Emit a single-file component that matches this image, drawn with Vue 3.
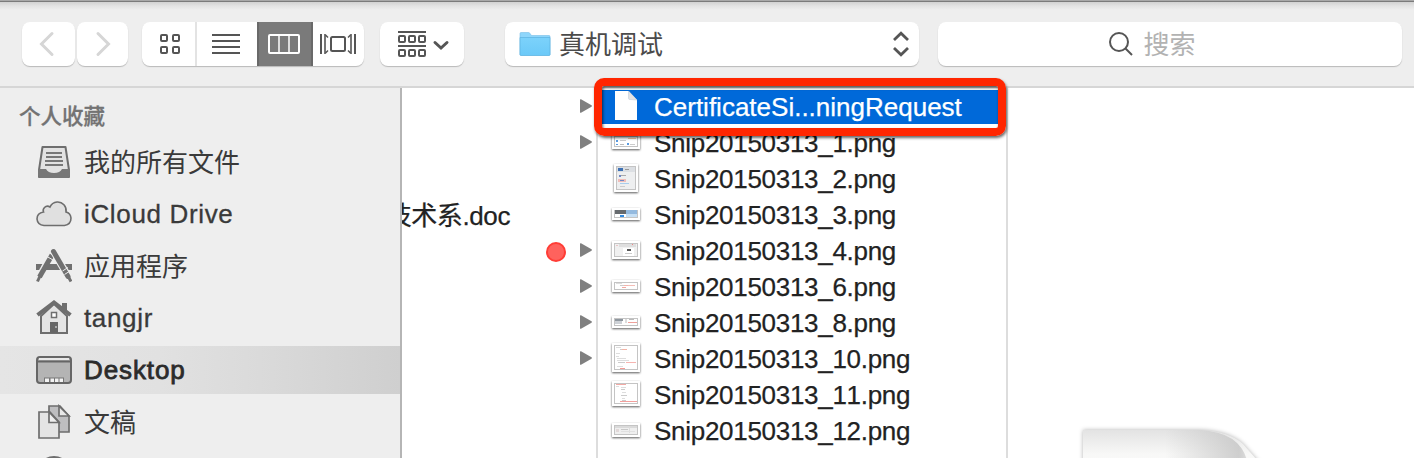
<script setup>
const folders = [
  { arrow: true },
  { arrow: true },
  {},
  { name: '技术系.doc' },
  { arrow: true, tag: true },
  { arrow: true },
  { arrow: true },
  { arrow: true },
  {},
  {},
]

// Each thumbnail: outer frame (x, y, w, h) and small coloured marks [x, y, w, h, colour]
const files = [
  { name: 'Snip20150313_1.png', x: 4, y: 9, w: 28, h: 15, marks: [[8, 15, 2, 2, '#5a9be0'], [12, 15, 6, 1, '#ccc'], [20, 13, 8, 1, '#f0c9a8'], [8, 19, 2, 1, '#5a9be0'], [12, 19, 4, 1, '#bbb'], [19, 18, 2, 2, '#5a9be0'], [22, 19, 5, 1, '#ccc']] },
  { name: 'Snip20150313_2.png', x: 6, y: 3, w: 24, h: 28, bg: '#eeeff0', marks: [[9, 6, 18, 5, '#dcdfe3'], [10, 7, 5, 3, '#3f72b5'], [17, 8, 4, 1, '#999'], [11, 14, 2, 2, '#7189c5'], [13, 14, 5, 1, '#aaa'], [10, 18, 8, 3, '#f0bdb9'], [12, 19, 4, 1, '#7189c5'], [12, 22, 9, 1, '#a9cdec'], [12, 25, 5, 1, '#ccc']] },
  { name: 'Snip20150313_3.png', x: 4, y: 11, w: 28, h: 12, marks: [[7, 13, 11, 4, '#666a6e'], [18, 13, 11, 4, '#94badf'], [18, 17, 11, 3, '#c5dff5'], [12, 18, 4, 2, '#338be0']] },
  { name: 'Snip20150313_4.png', x: 4, y: 8, w: 28, h: 18, bg: '#f0f0f0', marks: [[11, 11, 17, 3, '#dedede'], [8, 12, 2, 1, '#e9c5c5'], [15, 15, 11, 8, '#fff'], [19, 16, 4, 2, '#555'], [17, 20, 7, 1, '#ccc'], [24, 11, 1, 1, '#e88']] },
  { name: 'Snip20150313_6.png', x: 4, y: 11, w: 28, h: 12, marks: [[8, 14, 6, 1, '#ddd'], [12, 16, 4, 1, '#ccc'], [16, 16, 4, 1, '#f2b5ad'], [20, 16, 7, 1, '#f4beb7'], [14, 18, 4, 1, '#f4a9a2']] },
  { name: 'Snip20150313_8.png', x: 4, y: 11, w: 28, h: 12, marks: [[7, 14, 8, 2, '#8f979f'], [7, 16, 7, 3, '#cdd1d6'], [17, 14, 2, 4, '#ddd'], [21, 14, 5, 1, '#bbb'], [20, 17, 9, 1, '#f0a19b']] },
  { name: 'Snip20150313_10.png', x: 4, y: 2, w: 28, h: 29, marks: [[8, 6, 5, 1, '#ddd'], [12, 8, 4, 1, '#ccc'], [14, 8, 5, 1, '#f4b3a5'], [8, 12, 4, 1, '#ddd'], [8, 15, 3, 1, '#ddd'], [9, 17, 9, 1, '#ddd'], [9, 19, 12, 1, '#ddd'], [10, 21, 7, 1, '#ccc'], [18, 21, 10, 1, '#f6b5b1'], [9, 25, 6, 1, '#ddd'], [12, 27, 5, 1, '#f29a94']] },
  { name: 'Snip20150313_11.png', x: 4, y: 4, w: 28, h: 25, marks: [[8, 7, 10, 1, '#f3aaa5'], [8, 9, 3, 1, '#ddd'], [13, 10, 5, 1, '#ddd'], [13, 12, 4, 1, '#ccc'], [14, 15, 4, 1, '#ddd'], [13, 18, 6, 1, '#ccc'], [14, 21, 3, 1, '#ddd'], [14, 23, 4, 1, '#ccc'], [12, 24, 17, 1, '#f3a09d']] },
  { name: 'Snip20150313_12.png', x: 4, y: 10, w: 28, h: 14, bg: '#efefef', marks: [[7, 13, 22, 2, '#dadada'], [8, 16, 3, 3, '#e1d8d8'], [13, 16, 7, 1, '#c8c8c8'], [21, 14, 1, 6, '#ddd'], [13, 18, 14, 1, '#e0e0e0']] },
]
</script>

<template>
  <div class="dialog">
    <header class="toolbar">
      <div class="btn back">
        <svg width="53" height="44" viewBox="0 0 53 44"><path d="M30 11.500 L19.500 22 L30 32.500" fill="none" stroke="#d6d6d6" stroke-width="3" stroke-linecap="round" /></svg>
      </div>
      <div class="btn forward">
        <svg width="51" height="44" viewBox="0 0 51 44"><path d="M21 11.500 L31.500 22 L21 32.500" fill="none" stroke="#d6d6d6" stroke-width="3" stroke-linecap="round" /></svg>
      </div>
      <div class="btn views">
        <div class="seg icons">
          <svg width="53" height="44" viewBox="0 0 53 44" fill="none" stroke="#555" stroke-width="2">
            <rect x="19" y="13" width="6" height="6" rx="1" /><rect x="31" y="13" width="6" height="6" rx="1" />
            <rect x="19" y="25" width="6" height="6" rx="1" /><rect x="31" y="25" width="6" height="6" rx="1" />
          </svg>
        </div>
        <div class="seg list">
          <svg width="60" height="44" viewBox="0 0 60 44"><path d="M15 13H43M15 19H43M15 25H43M15 31H43" stroke="#555" stroke-width="2" /></svg>
        </div>
        <div class="seg columns">
          <svg width="52" height="44" viewBox="0 0 52 44" fill="none" stroke="#fff" stroke-width="2"><rect x="10" y="13" width="30" height="18" rx="1" /><path d="M20 13V31M30 13V31" stroke-width="1.500" /></svg>
        </div>
        <div class="seg flow">
          <svg width="51" height="44" viewBox="0 0 51 44" fill="none" stroke="#555" stroke-width="2">
            <rect x="18" y="15" width="14" height="14" rx="1.500" />
            <path d="M8 12V32M42 12V32" />
            <path d="M12 12V32M38 12V32" stroke-width="1.600" />
            <path d="M12.500 13L15 15.500M12.500 31L15 28.500M37.500 13L35 15.500M37.500 31L35 28.500" stroke-width="1.500" />
          </svg>
        </div>
      </div>
      <div class="btn arrange">
        <svg width="84" height="44" viewBox="0 0 84 44" fill="none" stroke="#555" stroke-width="2">
          <path d="M18 10H46M18 24H46" />
          <rect x="19" y="14" width="6" height="6" rx="1" /><rect x="29" y="14" width="6" height="6" rx="1" /><rect x="39" y="14" width="6" height="6" rx="1" />
          <rect x="19" y="28" width="6" height="6" rx="1" /><rect x="29" y="28" width="6" height="6" rx="1" /><rect x="39" y="28" width="6" height="6" rx="1" />
          <path d="M55 20.500L61 26L67 20.500" stroke-width="3" stroke-linecap="round" />
        </svg>
      </div>
      <div class="btn path">
        <svg width="32" height="28" viewBox="0 0 32 28">
          <defs><linearGradient id="folder" x1="0" y1="0" x2="0" y2="1"><stop offset="0" stop-color="#7cd2fb" /><stop offset="1" stop-color="#6bc9f8" /></linearGradient></defs>
          <path d="M1 25V3.500Q1 2.500 2 2.500H9.500Q10.500 2.500 11 3.500L12.500 5.500H30Q31 5.500 31 6.500V25Z" fill="#8ed6fb" stroke="#77bde8" stroke-width=".6" />
          <path d="M1 7.500H31V24.500Q31 25.500 30 25.500H2Q1 25.500 1 24.500Z" fill="url(#folder)" stroke="#5cb2df" stroke-width=".7" />
        </svg>
        <span class="path-name">真机调试</span>
        <svg class="stepper" width="20" height="28" viewBox="0 0 20 28" fill="none" stroke="#555" stroke-width="2.800"><path d="M3 10L10 3.300L17 10M3 18L10 24.700L17 18" /></svg>
      </div>
      <div class="btn search">
        <svg width="28" height="28" viewBox="0 0 28 28" fill="none" stroke="#555" stroke-width="2"><circle cx="12" cy="12" r="9" /><path d="M18.500 18.500L25 25" /></svg>
        <span>搜索</span>
      </div>
    </header>

    <div class="body">
      <aside class="sidebar">
        <h2>个人收藏</h2>
        <div class="place">
          <svg width="36" height="36" viewBox="0 0 36 36">
            <path d="M6.500 3H29.500L33 26V33H3V26Z" fill="#e2e2e2" stroke="#6e6e6e" stroke-width="2" stroke-linejoin="round" />
            <path d="M2 25H10Q12 29 18 29Q24 29 26 25H34V31Q34 34 31 34H5Q2 34 2 31Z" fill="#777" />
            <path d="M10 9H26M10 13H26M9 17H27M9 21H27" stroke="#777" stroke-width="1.800" />
          </svg>
          <span>我的所有文件</span>
        </div>
        <div class="place">
          <svg width="36" height="36" viewBox="0 0 36 36"><path d="M8 29.500H28.500Q35 28.500 35 22Q34.500 17 30 16C31 10.500 26.500 5.500 21 6Q16 6.500 14 11Q11 9 8.500 11.500Q6.500 13.500 7.500 16Q1 17 1 23Q1.500 29 8 29.500Z" fill="#e0e0e0" stroke="#6e6e6e" stroke-width="1.600" /></svg>
          <span class="latin">iCloud Drive</span>
        </div>
        <div class="place">
          <svg width="36" height="36" viewBox="0 0 36 36">
            <path d="M0 16H36V22H0Z" fill="#707070" />
            <path d="M16 6L3 30" stroke="#eee" stroke-width="7.500" />
            <path d="M17 3L33 30" stroke="#eee" stroke-width="7.500" />
            <path d="M12.500 16H23L26 22H9Z" fill="#707070" />
            <path d="M16 7L3.500 29" stroke="#707070" stroke-width="5" /><path d="M4 28L1.500 33.500" stroke="#707070" stroke-width="3" />
            <path d="M17.500 4L31.500 28.500" stroke="#eee" stroke-width="6.500" />
            <path d="M17.500 3.500L32 28.500" stroke="#707070" stroke-width="5" stroke-linecap="round" /><path d="M32.500 29L35 33.500" stroke="#707070" stroke-width="3" />
            <path d="M11 8.500L17 12M26.500 23L32 19.500M28.500 26.500L34 23" stroke="#eee" stroke-width="1" />
          </svg>
          <span>应用程序</span>
        </div>
        <div class="place">
          <svg width="36" height="36" viewBox="0 0 36 36">
            <path d="M26 3H31V13H26Z" fill="#6e6e6e" />
            <path d="M5 16L18 4L31 16V33H5Z" fill="#e4e4e4" stroke="#6e6e6e" stroke-width="2" />
            <path d="M1.500 15L18 2.500L34.500 15" fill="none" stroke="#6e6e6e" stroke-width="4" />
            <rect x="15.500" y="12.500" width="5" height="5" fill="#fff" stroke="#6e6e6e" stroke-width="1.500" />
            <path d="M14 22H22V33H14Z" fill="#666" /><path d="M20 26V28" stroke="#eee" />
          </svg>
          <span class="latin">tangjr</span>
        </div>
        <div class="place selected">
          <svg width="36" height="36" viewBox="0 0 36 36">
            <rect x="1" y="5" width="34" height="26" rx="3" fill="#b4b4b4" stroke="#666" stroke-width="2" />
            <path d="M3 6H33V8H3Z" fill="#e8e8e8" /><path d="M1 9.500H35" stroke="#666" stroke-width="1.800" />
            <path d="M8 25.500H28V30H8Z" fill="#777" /><path d="M9 26.500H13V30H9ZM14.500 26.500H18V30H14.500ZM19 26.500H22.500V30H19ZM23.500 26.500H27V30H23.500Z" fill="#f2f2f2" />
          </svg>
          <span class="latin">Desktop</span>
        </div>
        <div class="place">
          <svg width="36" height="36" viewBox="0 0 36 36" stroke="#6e6e6e" stroke-width="1.700">
            <path d="M13 2H24L33 12V28H13Z" fill="#bebec0" /><path d="M23 2V12H33Z" fill="#e8e8e8" />
            <path d="M3 8H14L23 18V34H3Z" fill="#e4e4e4" /><path d="M13 8V18.500H23Z" fill="#eee" />
          </svg>
          <span>文稿</span>
        </div>
        <div class="place">
          <svg width="36" height="36" viewBox="0 0 36 36"><circle cx="18" cy="17" r="16" fill="#e2e2e2" stroke="#6e6e6e" stroke-width="2" /></svg>
        </div>
      </aside>

      <section class="col parents">
        <div v-for="(f, i) in folders" :key="i" class="row">
          <span v-if="f.name" class="doc">{{ f.name }}</span>
          <i v-if="f.tag" class="tag"></i>
          <svg v-if="f.arrow" class="arrow" width="12" height="14" viewBox="0 0 12 14"><path d="M0 0.800Q0 -.2 1 .3L11.500 6.300Q12.300 7 11.500 7.700L1 13.700Q0 14.200 0 13.200Z" fill="#808080" /></svg>
        </div>
      </section>

      <section class="col files">
        <div class="row active">
          <svg width="36" height="36" viewBox="0 0 36 36"><path d="M7 2H20.500L29 11V31H7Z" fill="#fff" /><path d="M20.500 2V9.500Q20.500 10.500 22 10.500L29 11Z" fill="#e3e3e3" stroke="#b9c6d8" stroke-width=".5" /></svg>
          <span>CertificateSi...ningRequest</span>
          <div class="callout"></div>
        </div>
        <div v-for="f in files" :key="f.name" class="row">
          <svg width="36" height="36" viewBox="0 0 36 36">
            <rect class="frame" :x="f.x" :y="f.y" :width="f.w" :height="f.h" fill="#fff" />
            <rect :x="f.x + 2.5" :y="f.y + 2.5" :width="f.w - 5" :height="f.h - 5" :fill="f.bg || '#fff'" stroke="#c4c4c4" />
            <rect v-for="(m, i) in f.marks" :key="i" :x="m[0]" :y="m[1]" :width="m[2]" :height="m[3]" :fill="m[4]" />
          </svg>
          <span>{{ f.name }}</span>
        </div>
        <div class="row">
          <svg width="36" height="36"></svg>
          <span>S</span>
        </div>
      </section>

      <section class="preview">
        <svg width="230" height="120" viewBox="0 0 230 120">
          <defs>
            <linearGradient id="sheet" x1="0" y1="0" x2="0" y2="1"><stop offset="0" stop-color="#e3e3e3" /><stop offset=".22" stop-color="#f8f8f7" /><stop offset="1" stop-color="#fff" /></linearGradient>
            <linearGradient id="curl" x1="0" y1="0" x2="1" y2="0"><stop offset=".5" stop-color="#c4c4c4" stop-opacity="0" /><stop offset=".95" stop-color="#c4c4c4" stop-opacity=".8" /><stop offset="1" stop-color="#ddd" /></linearGradient>
          </defs>
          <g class="page">
            <path d="M10 10H127Q156 11 170 24L214 74V120H10Z" fill="url(#sheet)" />
            <path d="M10 10H127Q166 12 174 40L10 60Z" fill="url(#curl)" />
          </g>
        </svg>
      </section>
    </div>
  </div>
</template>

<style>
body { margin: 0; overflow: hidden; }
</style>

<style scoped>
* { box-sizing: border-box; }
svg { display: block; flex: none; }
.dialog {
  width: 1414px; height: 458px; overflow: hidden; background: #fff; color: #222;
  display: flex; flex-direction: column;
  font: 26px "Liberation Sans", "Noto Sans CJK SC", sans-serif;
  font-kerning: none;
}
.toolbar {
  height: 88px; flex: none; display: flex; align-items: flex-start; padding: 22px 12px 0 22px;
  background: linear-gradient(#a8a8a8 0 1px, #7b7b7b 1px 2px, #d2d2d2 2px, #e3e3e3 6px, #eee 10px);
  border-bottom: 2px solid #d6d6d6;
}
.btn { height: 44px; background: #fff; border-radius: 8px; box-shadow: 0 1px 1px #b9b9b9; display: flex; align-items: center; flex: none; }
.back { width: 53px; }
.forward { width: 51px; margin-left: 2px; }
.views { width: 222px; margin-left: 14px; overflow: hidden; }
.seg { height: 44px; }
.icons { width: 55px; border-right: 2px solid #e3e3e3; }
.list { width: 60px; }
.columns { width: 56px; background: #7a7a7a; border: solid #696969; border-width: 0 2px; }
.flow { width: 51px; }
.arrange { width: 84px; margin-left: 16px; }
.path { width: 414px; margin-left: 41px; padding: 0 8px 0 14px; color: #4b4b4b; }
.path-name { margin-left: 8px; line-height: 44px; padding-top: 2px; }
.stepper { margin-left: auto; }
.search { flex: 1; margin-left: 19px; justify-content: center; color: #b2b2b2; padding-right: 37px; }
.search span { margin-left: 8px; line-height: 44px; padding-top: 2px; }
.body { flex: 1; min-height: 0; display: flex; }
.sidebar { width: 402px; flex: none; background: #eee; border-right: 2px solid #b5b5b5; overflow: hidden; color: #3a3a3a; }
h2 { margin: 0; padding: 11px 0 0 19px; height: 50px; font-size: 21.5px; line-height: 36px; font-weight: 500; -webkit-text-stroke: .3px currentColor; color: #737373; }
.place { height: 48px; margin: 0 0 4px; padding-left: 36px; display: flex; align-items: center; }
.place span { margin-left: 12px; line-height: 48px; padding-top: 1px; }
.place .latin { -webkit-text-stroke: .3px currentColor; padding-top: 0; letter-spacing: .65px; }
.selected { background: linear-gradient(90deg, #e5e5e5, #e1e1e1 40%, #dadada 65%, #cfcfcf); color: #2b2b2b; }
.selected .latin { -webkit-text-stroke: .8px currentColor; letter-spacing: .9px; }
.col { flex: none; overflow: hidden; padding-top: 1px; }
.row { height: 36px; display: flex; align-items: center; white-space: nowrap; }
.parents { width: 196px; border-right: 2px solid #ddd; }
.parents .row { justify-content: flex-end; padding-right: 4px; }
.doc { margin-right: 82px; margin-top: -4px; letter-spacing: -.4px; -webkit-text-stroke: .25px currentColor; }
.tag { width: 20px; height: 20px; border: 2px solid #ff3d36; background: #ff625d; border-radius: 50%; margin-right: 14px; margin-top: 2px; }
.arrow { margin-bottom: 2px; }
.files { width: 410px; border-right: 2px solid #ddd; overflow: visible; }
.files .row { padding-left: 10px; }
.files span { margin-left: 10px; letter-spacing: -.29px; line-height: 36px; -webkit-text-stroke: .25px currentColor; }
.active { position: relative; color: #fff; background: linear-gradient(#fff 0 1px, #0069d9 1px 35px, #fff 35px); }
.files .active span { letter-spacing: 0; }
.callout { position: absolute; left: -4px; top: -11px; width: 412px; height: 58px; border: 8px solid #ff2600; border-radius: 10px; box-shadow: 1px 2px 3px rgba(0,0,0,.6), inset 1px 2px 3px rgba(0,0,0,.6); z-index: 2; }
.frame { filter: drop-shadow(0 1px 1.2px rgba(0,0,0,.65)); }
.preview { flex: 1; overflow: hidden; padding: 332px 0 0 65px; }
.page { filter: drop-shadow(0 0 2px rgba(0,0,0,.3)); }
</style>
